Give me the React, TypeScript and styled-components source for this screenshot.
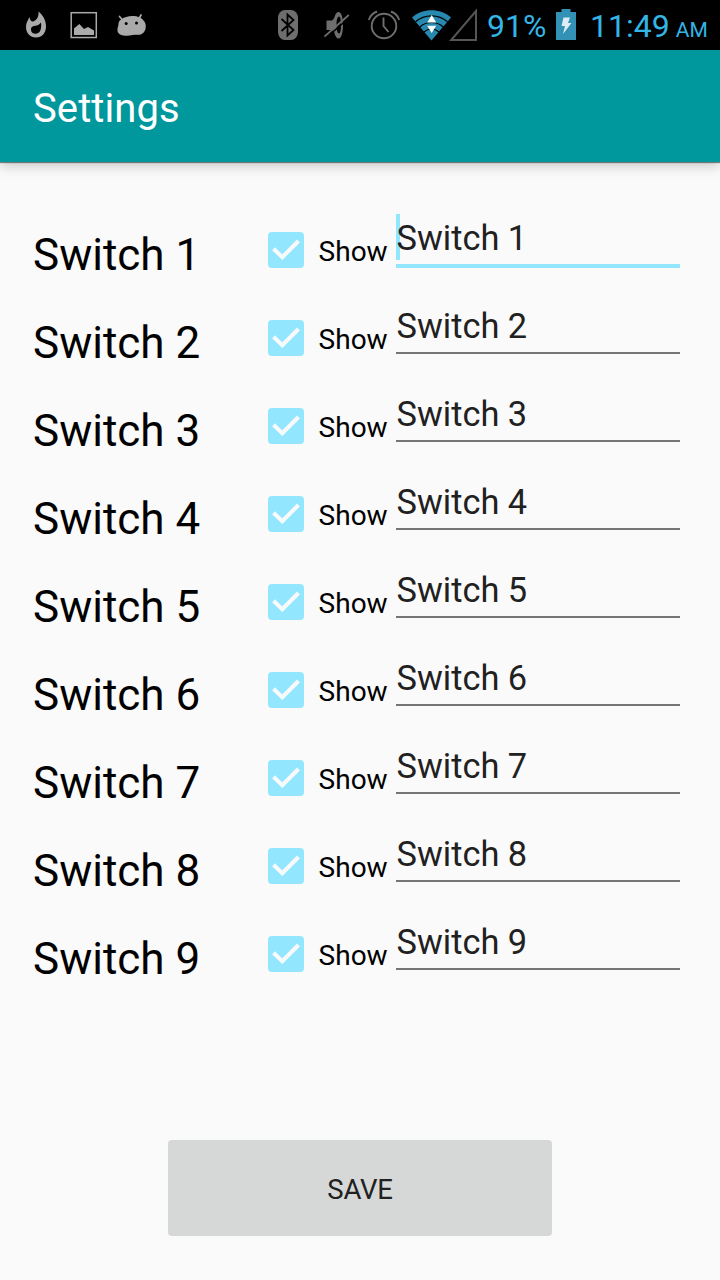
import * as React from "react";
import styled, { createGlobalStyle } from "styled-components";

const GlobalStyle = createGlobalStyle`
  * { box-sizing: border-box; }
  body {
    margin: 0;
    background: #fafafa;
    font-family: Roboto, sans-serif;
  }
`;

const Screen = styled.div`
  display: flex;
  flex-direction: column;
  width: 720px;
  height: 1280px;
  background: #fafafa;
`;

const StatusBar = styled.header`
  display: flex;
  height: 50px;
  background: #000;
  color: #33b5e5;
`;

const StatusIcon = styled.svg<{ $gap: number }>`
  flex: none;
  height: 50px;
  margin-left: ${p => p.$gap}px;
`;

const StatusText = styled.span<{ $gap: number; $width?: number }>`
  flex: none;
  width: ${p => p.$width ? `${p.$width}px` : "auto"};
  margin-left: ${p => p.$gap}px;
  font-size: 32px;
  line-height: 52px;
  white-space: nowrap;
`;

const Meridiem = styled.span`
  margin-left: 6px;
  font-size: 21px;
`;

const Toolbar = styled.div`
  display: flex;
  align-items: center;
  height: 112px;
  padding: 4px 33px 0;
  background: #00979d;
  color: #fff;
  box-shadow: 0 1px 1px rgba(0, 0, 0, 0.45), 0 4px 12px rgba(0, 0, 0, 0.2);
`;

const Title = styled.h1`
  margin: 0;
  font-size: 40px;
  font-weight: 400;
  letter-spacing: 0.1px;
`;

const List = styled.main`
  padding: 44px 40px 0 33px;
`;

const Row = styled.div`
  display: flex;
  height: 88px;
`;

const Label = styled.div`
  width: 235px;
  padding-top: 5px;
  font-size: 44px;
  line-height: 88px;
  color: #000;
`;

const Check = styled.label`
  display: flex;
  align-items: center;
  width: 128px;
  font-size: 28px;
  line-height: 34px;
  color: #000;
`;

const Box = styled.span`
  display: flex;
  flex: none;
  width: 36px;
  height: 36px;
  margin-right: 14.600px;
  border-radius: 4px;
  background: #92e7ff;
`;

const CheckText = styled.span`
  padding-top: 3px;
`;

const Field = styled.div<{ $focused: boolean }>`
  display: flex;
  width: 284px;
  height: ${p => p.$focused ? 62 : 60}px;
  padding-top: 8px;
  border-bottom: ${p => p.$focused ? "4px solid #92e7ff" : "2px solid #757575"};
  font-size: 34.400px;
  line-height: 49px;
  color: #212121;
`;

const Caret = styled.span`
  width: 4px;
  height: 46px;
  margin-right: -4px;
  background: #92e7ff;
`;

const FieldText = styled.span`
  position: relative;
  padding-left: 0.500px;
`;

const SaveButton = styled.button`
  width: 384px;
  height: 96px;
  margin: 142px auto 0;
  padding: 3px 0 0;
  border: 0;
  border-radius: 4px;
  background: #d6d8d7;
  color: #212121;
  font: 400 27.500px Roboto, sans-serif;
  letter-spacing: -0.200px;
`;

const Flame = () =>
  <StatusIcon $gap={26} width={20} viewBox="0 0 20 50">
    <path
      fill="#aaa"
      fillRule="evenodd"
      d="M12.500 11.500c4.500 3.500 7.500 9 7.500 15 0 6.500-4 11-10 11S0 33 0 27c0-4 1.500-6 3.500-10 .5 3 1.500 4.500 3.500 4.500 3.500-1 6-4.500 5.500-10zM15 22.500c-1.500 2-3 3-6 3.300-3 .4-4 1.700-4 3.700 0 3 2 4.300 4.500 4.300 4 0 6.500-4 5.500-11.300z"
    />
  </StatusIcon>;

const Picture = () =>
  <StatusIcon $gap={24} width={28} viewBox="0 0 28 50">
    <rect x="1.200" y="12.700" width="25.100" height="24.800" fill="none" stroke="#aaa" strokeWidth="1.500" />
    <path fill="#aaa" d="M4 35v-6.500l5.300-4.500 4.700 5 4-2 6 3.500V35z" />
  </StatusIcon>;

const Droid = () =>
  <StatusIcon $gap={19} width={29} viewBox="0 0 29 50">
    <path stroke="#aaa" strokeWidth="1.700" strokeLinecap="round" d="M2.500 16.500L5.500 20M24 15l-2 4" />
    <path
      fill="#aaa"
      d="M3.500 20C7 17 11 16 15.500 16c5 0 9.500 2 11 4.500 2 2 2.500 4 2.200 7-.3 4-3.200 7.300-7.200 7.300-2 0-4 .2-6 .3-3 .7-6 .9-9 .4C2.500 35 0 32.500.5 29c.2-2 1-3 1-5 0-1.500.7-3 2-4z"
    />
    <circle cx="9.200" cy="23.500" r="1.500" />
    <circle cx="19.500" cy="23" r="1.500" />
  </StatusIcon>;

const Bluetooth = () =>
  <StatusIcon $gap={132} width={20} viewBox="0 0 20 50">
    <rect y="10" width="20" height="30" rx="7" ry="8" fill="#6e6e6e" />
    <path fill="none" stroke="#000" strokeWidth="1.800" d="M3.500 19l12 11-6 5.500v-21l6 5.500-12 11" />
  </StatusIcon>;

const Muted = () =>
  <StatusIcon $gap={26} width={26} viewBox="0 0 26 50">
    <path fill="#6e6e6e" d="M2.500 20.500H8l3.500-3.500v16L8 30H2.500z" />
    <path
      fill="#6e6e6e"
      fillRule="evenodd"
      d="M14.500 12c3 0 4.500 6 4.500 13s-1.500 13.500-4.500 13.500S9.500 32 9.500 25s2-13 5-13zm.5 4.500c-1.500 0-2.500 4-2.500 8.500s1 8.500 2.500 8.500 2-4 2-8.500-.5-8.500-2-8.500z"
    />
    <path stroke="#000" strokeWidth="1.600" d="M1.500 38.500L25.500 17.300" />
    <path stroke="#6e6e6e" strokeWidth="1.700" d="M.5 36.500L24.800 15" />
  </StatusIcon>;

const Alarm = () =>
  <StatusIcon $gap={18} width={32} viewBox="0 0 32 50">
    <g fill="none" stroke="#6e6e6e" strokeWidth="1.900">
      <circle cx="16" cy="26" r="12.300" />
      <path d="M15.500 17.500V26l5 6M.8 20C2 16 5 13 9 11.500M31.200 20C30 16 27 13 23 11.500" />
    </g>
  </StatusIcon>;

const Wifi = () =>
  <StatusIcon $gap={12} width={39} viewBox="0 0 39 50">
    <path fill="#2788b0" d="M0 17.500C11 7.800 28 7.800 39 17.500L19.500 40.500z" />
    <path
      fill="none"
      stroke="#000"
      strokeWidth="1.200"
      d="M3.500 21.800c9-8 23-8 32 0M7.800 27c6.500-6 17-6 23.500 0M12 32c4.500-4 10.500-4 15 0"
    />
    <path fill="#fff" d="M19.700 15l4.500 7.500h-9zM15.200 25.800h9l-4.500 7.200z" />
  </StatusIcon>;

const Signal = () =>
  <StatusIcon $gap={-2} width={28} viewBox="0 0 28 50">
    <path fill="none" stroke="#555" strokeWidth="2" d="M27 11v29H2.200z" />
  </StatusIcon>;

const Battery = () =>
  <StatusIcon $gap={0} width={20} viewBox="0 0 20 50">
    <path fill="#3391b5" d="M5.500 9h9v3H20v28H0V12h5.500z" />
    <path fill="#dceef4" d="M7.500 17.500h6.500l-2 5.500h3.500l-8.500 11 2-8H5.500z" />
  </StatusIcon>;

const SwitchRow = (props: { name: string, focused: boolean }) =>
  <Row>
    <Label>{props.name}</Label>
    <Check>
      <Box>
        <svg width="36" height="36" viewBox="0 0 36 36">
          <path fill="none" stroke="#fafafa" strokeWidth="4" d="M5.500 16.700l8.800 8.500L30.500 9" />
        </svg>
      </Box>
      <CheckText>Show</CheckText>
    </Check>
    <Field $focused={props.focused}>
      {props.focused && <Caret />}
      <FieldText>{props.name}</FieldText>
    </Field>
  </Row>;

const App = () =>
  <Screen>
    <GlobalStyle />
    <StatusBar>
      <Flame />
      <Picture />
      <Droid />
      <Bluetooth />
      <Muted />
      <Alarm />
      <Wifi />
      <Signal />
      <StatusText $gap={10} $width={69}>91%</StatusText>
      <Battery />
      <StatusText $gap={14}>11:49<Meridiem>AM</Meridiem></StatusText>
    </StatusBar>
    <Toolbar>
      <Title>Settings</Title>
    </Toolbar>
    <List>
      {[1, 2, 3, 4, 5, 6, 7, 8, 9].map(n =>
        <SwitchRow key={n} name={`Switch ${n}`} focused={n === 1} />
      )}
    </List>
    <SaveButton>SAVE</SaveButton>
  </Screen>;

export default App;
